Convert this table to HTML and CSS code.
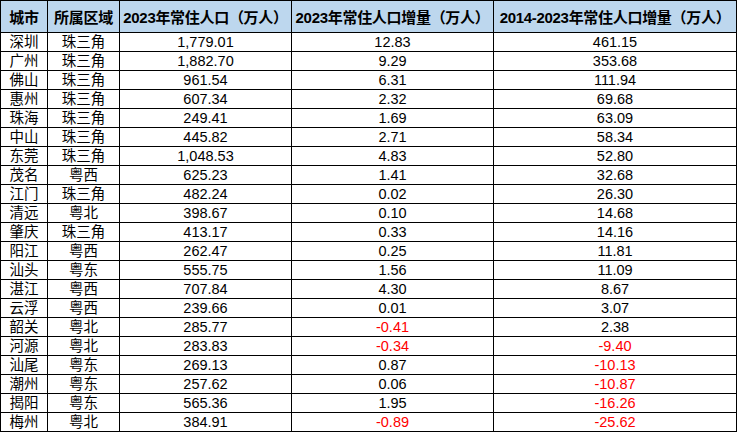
FILE: index.html
```html
<!DOCTYPE html>
<html lang="zh">
<head>
<meta charset="utf-8">
<link rel="stylesheet" href="styles.css">
</head>
<body>
<table class="pop">
  <colgroup>
    <col class="c-city">
    <col class="c-region">
    <col class="c-pop">
    <col class="c-inc">
    <col class="c-inc10">
  </colgroup>
  <thead>
    <tr>
      <th>城市</th>
      <th>所属区域</th>
      <th>2023年常住人口（万人）</th>
      <th>2023年常住人口增量（万人）</th>
      <th>2014-2023年常住人口增量（万人）</th>
    </tr>
  </thead>
  <tbody>
    <tr><td>深圳</td><td>珠三角</td><td>1,779.01</td><td>12.83</td><td>461.15</td></tr>
    <tr><td>广州</td><td>珠三角</td><td>1,882.70</td><td>9.29</td><td>353.68</td></tr>
    <tr><td>佛山</td><td>珠三角</td><td>961.54</td><td>6.31</td><td>111.94</td></tr>
    <tr><td>惠州</td><td>珠三角</td><td>607.34</td><td>2.32</td><td>69.68</td></tr>
    <tr><td>珠海</td><td>珠三角</td><td>249.41</td><td>1.69</td><td>63.09</td></tr>
    <tr><td>中山</td><td>珠三角</td><td>445.82</td><td>2.71</td><td>58.34</td></tr>
    <tr><td>东莞</td><td>珠三角</td><td>1,048.53</td><td>4.83</td><td>52.80</td></tr>
    <tr><td>茂名</td><td>粤西</td><td>625.23</td><td>1.41</td><td>32.68</td></tr>
    <tr><td>江门</td><td>珠三角</td><td>482.24</td><td>0.02</td><td>26.30</td></tr>
    <tr><td>清远</td><td>粤北</td><td>398.67</td><td>0.10</td><td>14.68</td></tr>
    <tr><td>肇庆</td><td>珠三角</td><td>413.17</td><td>0.33</td><td>14.16</td></tr>
    <tr><td>阳江</td><td>粤西</td><td>262.47</td><td>0.25</td><td>11.81</td></tr>
    <tr><td>汕头</td><td>粤东</td><td>555.75</td><td>1.56</td><td>11.09</td></tr>
    <tr><td>湛江</td><td>粤西</td><td>707.84</td><td>4.30</td><td>8.67</td></tr>
    <tr><td>云浮</td><td>粤西</td><td>239.66</td><td>0.01</td><td>3.07</td></tr>
    <tr><td>韶关</td><td>粤北</td><td>285.77</td><td class="neg">-0.41</td><td>2.38</td></tr>
    <tr><td>河源</td><td>粤北</td><td>283.83</td><td class="neg">-0.34</td><td class="neg">-9.40</td></tr>
    <tr><td>汕尾</td><td>粤东</td><td>269.13</td><td>0.87</td><td class="neg">-10.13</td></tr>
    <tr><td>潮州</td><td>粤东</td><td>257.62</td><td>0.06</td><td class="neg">-10.87</td></tr>
    <tr><td>揭阳</td><td>粤东</td><td>565.36</td><td>1.95</td><td class="neg">-16.26</td></tr>
    <tr><td>梅州</td><td>粤北</td><td>384.91</td><td class="neg">-0.89</td><td class="neg">-25.62</td></tr>
  </tbody>
</table>
</body>
</html>
```
FILE: styles.css
```css
html, body {
  margin: 0;
  padding: 0;
  background: #ffffff;
}
.pop {
  border-collapse: collapse;
  table-layout: fixed;
  width: 736px;
  font-family: "Liberation Sans", "Noto Sans CJK SC", sans-serif;
  color: #000;
}
.c-city { width: 47px; }
.c-region { width: 72px; }
.c-pop { width: 172px; }
.c-inc { width: 202px; }
.c-inc10 { width: 243px; }
.pop th, .pop td {
  border: 1px solid #000;
  padding: 0;
  text-align: center;
  white-space: nowrap;
  overflow: hidden;
}
.pop th {
  background: #bdd7ee;
  height: 31px;
  font-size: 15px;
  font-weight: bold;
  letter-spacing: -0.3px;
}
.pop td {
  height: 18px;
  font-size: 14.5px;
  line-height: 18px;
  font-weight: normal;
}
.pop td.neg {
  color: #ff0000;
}
```
